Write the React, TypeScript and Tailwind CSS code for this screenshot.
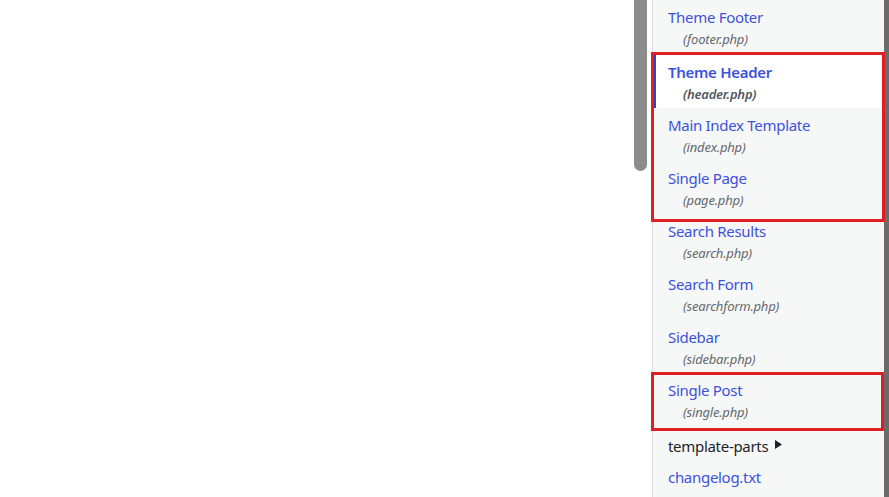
import { Fragment } from 'react';

type FileItem = { title: string; file: string; active?: boolean };

const files: FileItem[] = [
  { title: 'Theme Footer', file: 'footer.php' },
  { title: 'Theme Header', file: 'header.php', active: true },
  { title: 'Main Index Template', file: 'index.php' },
  { title: 'Single Page', file: 'page.php' },
  { title: 'Search Results', file: 'search.php' },
  { title: 'Search Form', file: 'searchform.php' },
  { title: 'Sidebar', file: 'sidebar.php' },
  { title: 'Single Post', file: 'single.php' },
];

function FileRow({ item }: { item: FileItem }) {
  if (item.active) {
    return (
      <li className="h-[55px] border-l-[3px] border-[#2f43c4] bg-white pl-[12px] pt-[8px]">
        <div className="text-[15px] leading-[22px] font-semibold tracking-[-0.3px] text-[#3c52dc]">
          {item.title}
        </div>
        <div className="pl-[15px] text-[13px] leading-[22px] font-semibold italic tracking-[-0.2px] text-[#50575e]">
          ({item.file})
        </div>
      </li>
    );
  }
  return (
    <li className="h-[53px] pl-[15px] pt-[6px]">
      <div className="text-[15px] leading-[22px] tracking-[-0.3px] text-[#3c52dc]">{item.title}</div>
      <div className="pl-[15px] text-[13px] leading-[22px] italic tracking-[-0.2px] text-[#646970]">
        ({item.file})
      </div>
    </li>
  );
}

export default function App() {
  return (
    <div className="flex h-[497px] w-[889px] overflow-hidden bg-white font-['Noto_Sans',sans-serif]">
      {/* editor area, scrolled */}
      <div className="flex flex-1">
        <div className="flex-1" />
        <div className="mr-[5px] w-[13px]">
          <div className="h-[171px] w-full rounded-b-[7px] bg-[#8c8c8c]" />
        </div>
      </div>

      {/* theme files list */}
      <div className="relative w-[232px] border-l border-[#dcdcde] bg-[#f6f7f7]">
        <ul>
          {files.map((f) => (
            <Fragment key={f.file}>
              <FileRow item={f} />
            </Fragment>
          ))}
          <li className="flex items-center gap-[7px] pl-[15px] pt-[9px] pb-[9px] text-[15px] leading-[22px] tracking-[-0.3px] text-[#1d2327]">
            template-parts
            <svg width="7" height="9" viewBox="0 0 7 9" className="mt-[-3px]">
              <polygon points="0,0 7,4.5 0,9" fill="#1d2327" />
            </svg>
          </li>
          <li className="pl-[15px] text-[15px] leading-[22px] tracking-[-0.3px] text-[#3c52dc]">changelog.txt</li>
        </ul>

        {/* annotation boxes */}
        <div className="pointer-events-none absolute left-[-2px] top-[52px] h-[170px] w-[234px] border-[3px] border-[#e01e25]" />
        <div className="pointer-events-none absolute left-[-2px] top-[372px] h-[59px] w-[233px] border-[3px] border-[#e01e25]" />
      </div>

      <div className="w-[5px] bg-[#6b6b6b]" />
    </div>
  );
}
